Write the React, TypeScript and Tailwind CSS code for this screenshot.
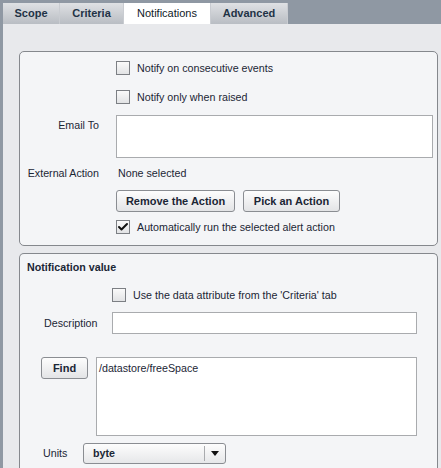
import { Check } from 'lucide-react';

const tabs = ['Scope', 'Criteria', 'Notifications', 'Advanced'];
const tabWidths: Record<string, string> = {
  Scope: 'w-[57px]',
  Criteria: 'w-[64px]',
  Notifications: 'w-[87px]',
  Advanced: 'w-[77px]',
};

function Checkbox({ checked = false }: { checked?: boolean }) {
  return (
    <span className="w-[14px] h-[14px] shrink-0 border border-[#7c7f84] bg-gradient-to-b from-[#fafafa] to-[#e2e3e5] flex items-center justify-center">
      {checked && <Check className="w-[12px] h-[12px] text-[#111]" strokeWidth={4} />}
    </span>
  );
}

function Btn({ label, className = '' }: { label: string; className?: string }) {
  return (
    <button
      className={`h-[22px] rounded-[3px] border border-[#8a8d92] bg-gradient-to-b from-[#fdfdfd] to-[#e3e4e6] text-[11px] font-bold text-[#1b2635] ${className}`}
    >
      {label}
    </button>
  );
}

export default function App() {
  return (
    <div
      className="w-[441px] h-[468px] overflow-hidden flex flex-col text-[10.7px] text-[#1b2635]"
      style={{ fontFamily: '"Liberation Sans", Arial, sans-serif' }}
    >
      {/* Tab bar */}
      <div className="h-[24px] shrink-0 bg-[#8f98a3] flex items-end pl-[3px]">
        {tabs.map((t) => {
          const active = t === 'Notifications';
          return (
            <div
              key={t}
              className={`${tabWidths[t]} h-[21px] flex items-center justify-center text-[11px] border-r border-[#c9ccd1] ${
                active
                  ? 'bg-white text-[#0f1a28]'
                  : 'bg-gradient-to-b from-[#dfe1e4] to-[#b9bdc3] font-bold text-[#1f3346]'
              }`}
            >
              {t}
            </div>
          );
        })}
      </div>

      {/* Content */}
      <div className="flex-1 bg-[#e8e9ec] border-l-[3px] border-[#8f98a3] pt-[27px] pl-[16px] pr-[3px] flex flex-col gap-[7px]">
        {/* Panel 1 */}
        <div className="h-[195px] shrink-0 rounded-[5px] border border-[#85888d] bg-[#f4f5f7] pt-[9px] pl-[96px] pr-[4px] flex flex-col">
          <div className="h-[14px] flex items-center gap-[7px]">
            <Checkbox />
            <span>Notify on consecutive events</span>
          </div>
          <div className="h-[14px] mt-[15px] flex items-center gap-[7px]">
            <Checkbox />
            <span>Notify only when raised</span>
          </div>
          <div className="relative mt-[11px]">
            <span className="absolute right-[calc(100%+17px)] top-[2px] whitespace-nowrap">Email To</span>
            <div className="h-[43px] border border-[#a9abae] bg-white" />
          </div>
          <div className="relative h-[14px] mt-[8px] flex items-center pl-[2px]">
            <span className="absolute right-[calc(100%+17px)] whitespace-nowrap">External Action</span>
            <span>None selected</span>
          </div>
          <div className="flex gap-[8px] mt-[10px]">
            <Btn label="Remove the Action" className="w-[119px]" />
            <Btn label="Pick an Action" className="w-[97px]" />
          </div>
          <div className="h-[14px] mt-[8px] flex items-center gap-[7px]">
            <Checkbox checked />
            <span>Automatically run the selected alert action</span>
          </div>
        </div>

        {/* Panel 2 */}
        <div className="flex-1 rounded-t-[5px] border border-b-0 border-[#85888d] bg-[#f4f5f7] pt-[6px] pl-[7px] pr-[20px] flex flex-col">
          <div className="h-[14px] flex items-center font-bold">Notification value</div>
          <div className="h-[14px] mt-[14px] ml-[85px] flex items-center gap-[7px]">
            <Checkbox />
            <span>Use the data attribute from the 'Criteria' tab</span>
          </div>
          <div className="flex items-center mt-[10px]">
            <span className="w-[85px] pl-[17px]">Description</span>
            <div className="flex-1 h-[22px] border border-[#a9abae] bg-white" />
          </div>
          <div className="flex items-start mt-[23px]">
            <div className="w-[69px] pl-[14px]">
              <Btn label="Find" className="w-[47px]" />
            </div>
            <div className="flex-1 h-[79px] border border-[#a9abae] bg-white px-[2px] pt-[3px] leading-[14px]">
              /datastore/freeSpace
            </div>
          </div>
          <div className="flex items-center mt-[7px]">
            <span className="w-[56px] pl-[16px]">Units</span>
            <div className="w-[143px] h-[21px] rounded-[3px] border border-[#8a8d92] bg-gradient-to-b from-[#fdfdfd] to-[#e6e7e9] flex items-center">
              <span className="flex-1 pl-[9px] font-bold">byte</span>
              <span className="w-px h-[15px] bg-[#a9abae]" />
              <span className="w-[20px] flex justify-center">
                <svg width="8" height="5" viewBox="0 0 8 5">
                  <path d="M0 0 H8 L4 5 Z" fill="#111" />
                </svg>
              </span>
            </div>
          </div>
        </div>
      </div>
    </div>
  );
}
